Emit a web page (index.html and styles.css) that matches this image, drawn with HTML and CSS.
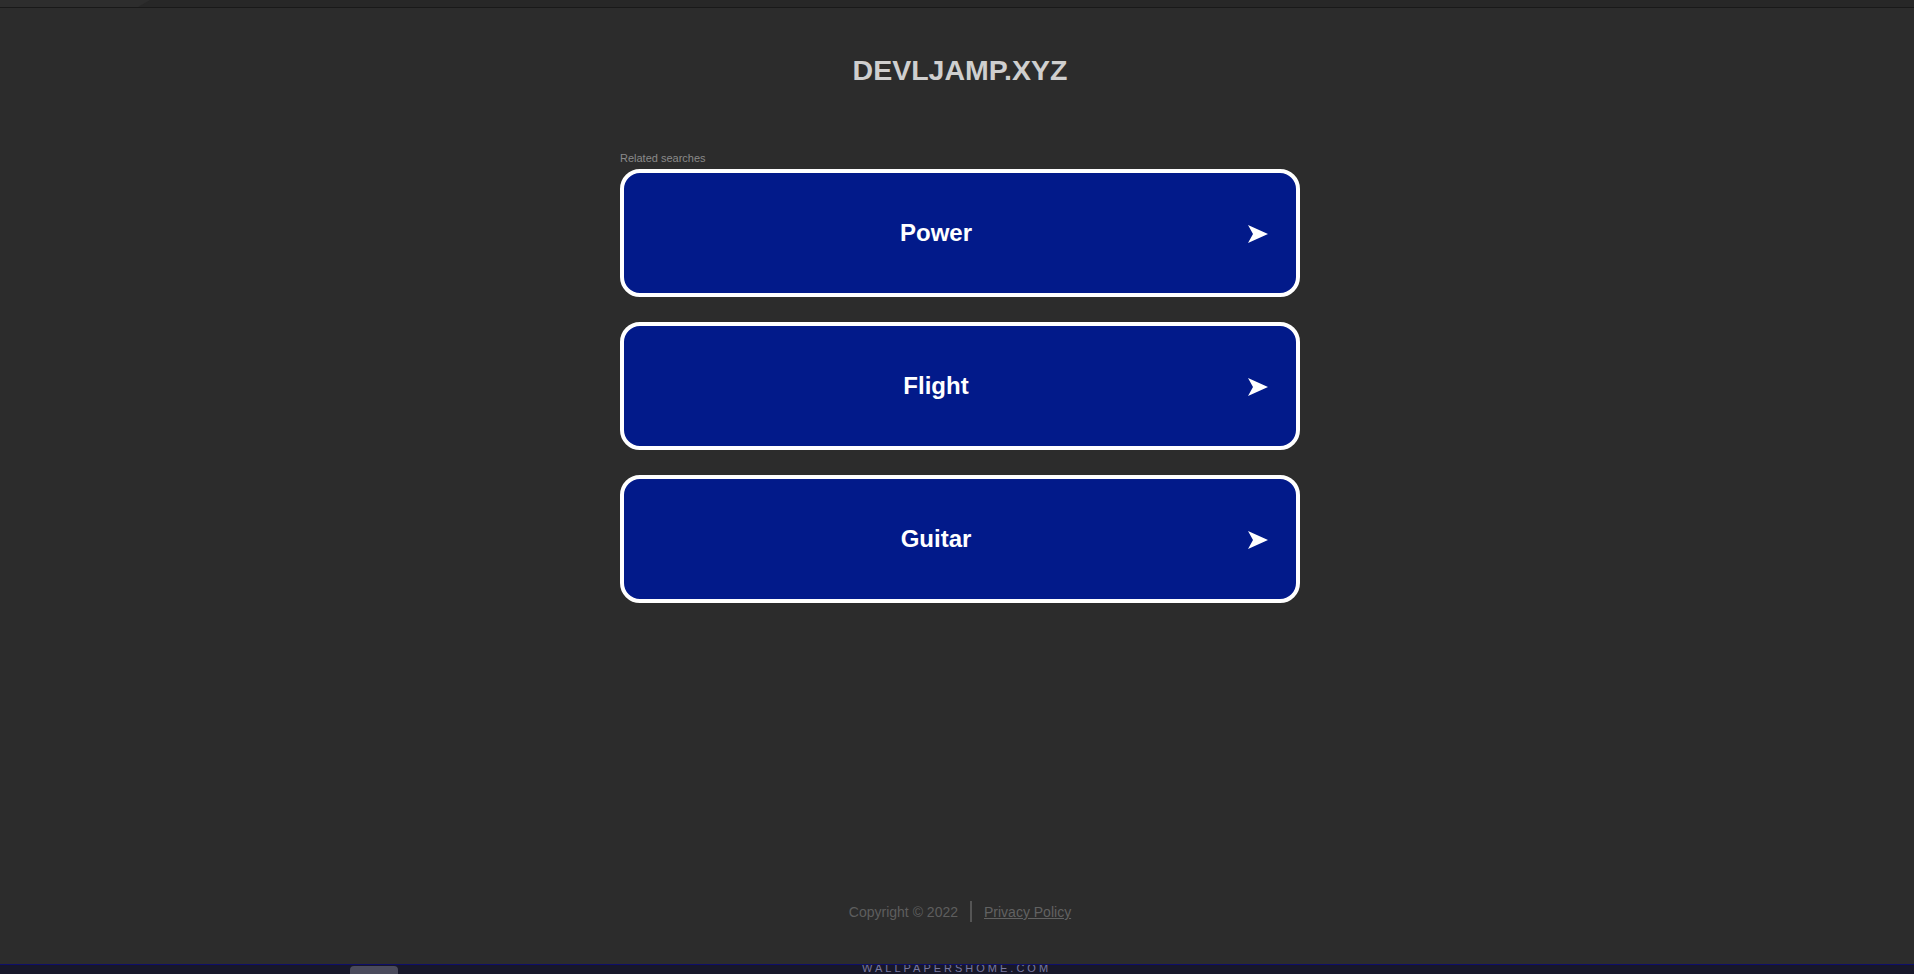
FILE: index.html
```html
<!DOCTYPE html>
<html lang="en">
<head>
<meta charset="utf-8">
<title>devljamp.xyz</title>
<link rel="stylesheet" href="styles.css">
</head>
<body>
<div class="topbar"><div class="toptab"></div></div>
<div class="page">
  <main class="main">
    <h1 class="title">DEVLJAMP.XYZ</h1>
    <div class="related">
      <div class="related-label">Related searches</div>
      <a class="search-link" href="#"><span class="link-text">Power</span><svg class="arrow" width="20" height="18" viewBox="0 0 20 18"><path d="M0 0 L20 9 L0 18 L5 9 Z" fill="#fff"/></svg></a>
      <a class="search-link" href="#"><span class="link-text">Flight</span><svg class="arrow" width="20" height="18" viewBox="0 0 20 18"><path d="M0 0 L20 9 L0 18 L5 9 Z" fill="#fff"/></svg></a>
      <a class="search-link" href="#"><span class="link-text">Guitar</span><svg class="arrow" width="20" height="18" viewBox="0 0 20 18"><path d="M0 0 L20 9 L0 18 L5 9 Z" fill="#fff"/></svg></a>
    </div>
  </main>
  <footer class="footer">
    <span class="copy">Copyright © 2022</span>
    <span class="sep"></span>
    <a class="privacy" href="#">Privacy Policy</a>
  </footer>
</div>
<div class="strip">
  <div class="strip-tab"></div>
  <div class="strip-text">WALLPAPERSHOME.COM</div>
</div>
</body>
</html>
```

FILE: styles.css
```css
html, body {
  margin: 0;
  padding: 0;
}
body {
  background: #2c2c2c;
  font-family: "Liberation Sans", Arial, sans-serif;
  height: 974px;
  overflow: hidden;
}
.topbar {
  height: 7px;
  background: #272727;
  border-bottom: 1px solid #191919;
  overflow: hidden;
}
.toptab {
  width: 150px;
  height: 7px;
  background: #2d2d2d;
  clip-path: polygon(0 0, 100% 0, 92% 100%, 0 100%);
}
.page {
  height: 956px;
  display: flex;
  flex-direction: column;
  padding-left: 6px;
}
.main {
  width: 680px;
  margin: 0 auto;
}
.title {
  margin: 46px 0 0;
  font-size: 28.5px;
  line-height: 32px;
  font-weight: bold;
  color: #cfcfcf;
  text-align: center;
}
.related {
  margin-top: 66px;
}
.related-label {
  font-size: 11px;
  line-height: 13px;
  color: #8a8a8a;
  margin-bottom: 4px;
}
.search-link {
  box-sizing: border-box;
  height: 128px;
  margin-bottom: 25px;
  border: 4px solid #ffffff;
  border-radius: 20px;
  background: #021a8a;
  display: flex;
  align-items: center;
  text-decoration: none;
  color: #ffffff;
  padding: 0 28px 0 0;
}
.link-text {
  flex: 1;
  text-align: center;
  font-size: 24px;
  line-height: 28px;
  font-weight: bold;
  padding-left: 7px;
}
.arrow {
  display: block;
  margin-left: 7px;
  margin-top: 1px;
}
.footer {
  margin-top: auto;
  margin-bottom: 42px;
  display: flex;
  justify-content: center;
  align-items: flex-start;
  height: 21px;
  font-size: 14px;
}
.copy, .privacy {
  line-height: 21px;
  margin-top: 1px;
  color: #5e5e5e;
}
.privacy {
  color: #626262;
  text-decoration: underline;
}
.sep {
  width: 2px;
  height: 21px;
  background: #555555;
  margin: 0 12px;
}
.strip {
  height: 9px;
  border-top: 1px solid #0e0e6a;
  background: #17172a;
  display: flex;
  overflow: hidden;
}
.strip-tab {
  width: 48px;
  height: 9px;
  margin-left: 350px;
  margin-top: 1px;
  background: #4a4a5c;
  border-radius: 4px 4px 0 0;
}
.strip-text {
  margin-left: 464px;
  margin-top: -3px;
  font-size: 11px;
  line-height: 13px;
  letter-spacing: 3px;
  color: #7878a0;
  white-space: nowrap;
}
```
